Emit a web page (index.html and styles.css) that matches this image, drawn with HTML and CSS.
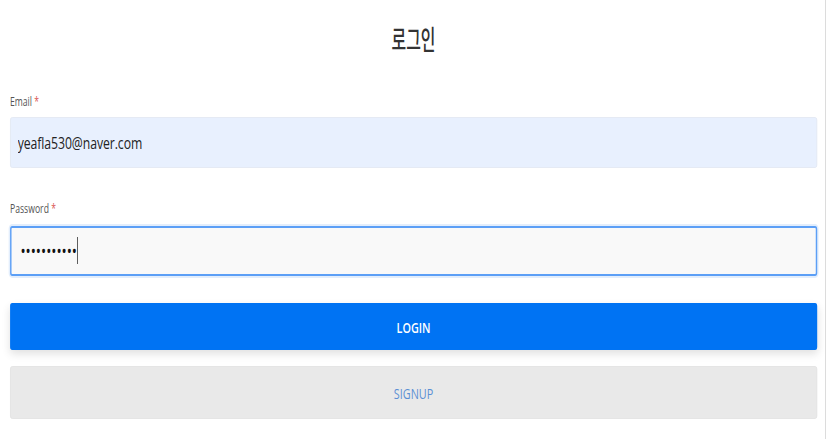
FILE: index.html
```html
<!DOCTYPE html>
<html lang="ko">
<head>
<meta charset="utf-8">
<title>로그인</title>
<link rel="stylesheet" href="styles.css">
</head>
<body>
<div class="page">
  <h1 class="title"><span>로그인</span></h1>
  <form class="form">
    <label class="label label-email" for="email">Email <span class="req">*</span></label>
    <input class="field field-email" id="email" type="email" value="yeafla530@naver.com">
    <label class="label label-pw" for="pw">Password <span class="req">*</span></label>
    <div class="pw-wrap">
      <input class="field field-pw" id="pw" type="password" value="12345678901">
      <span class="caret"></span>
    </div>
    <button type="button" class="btn btn-login">LOGIN</button>
    <button type="button" class="btn btn-signup">SIGNUP</button>
  </form>
</div>
</body>
</html>
```
FILE: styles.css
```css
* { box-sizing: border-box; }
html, body { margin: 0; padding: 0; background: #fff; }
body {
  width: 826px;
  height: 439px;
  overflow: hidden;
  border-right: 1px solid #dcdcdc;
  font-family: "Open Sans", "Noto Sans CJK KR", sans-serif;
}
.page {
  width: calc(825px / 0.72);
  transform: scaleX(0.72);
  transform-origin: 0 0;
  padding: 0 calc(8px / 0.72) 0 calc(10px / 0.72);
}
.title {
  margin: 0;
  padding-top: 22px;
  height: 95px;
  line-height: 34px;
  font-size: 27px;
  font-weight: 500;
  color: #333;
  text-align: center;
  font-family: "Noto Sans CJK KR", sans-serif;
}
.title span { display: inline-block; transform: scaleX(0.82); }
.form { display: flex; flex-direction: column; }
.label {
  font-size: 12px;
  line-height: 14px;
  color: #555;
}
.req { color: #d9534f; }
.label-pw { margin-top: 34px; }
.field {
  width: 100%;
  margin: 0;
  font-family: "Open Sans", sans-serif;
  font-size: 17px;
  color: #222;
  border-radius: 3px;
  outline: none;
}
.field-email {
  margin-top: 8px;
  height: 51px;
  background: #e8f0fe;
  border: 1px solid #e2e8f2;
  padding: 0 0 0 calc(7px / 0.72);
  letter-spacing: -0.1px;
}
.pw-wrap { position: relative; margin-top: 10px; }
.field-pw {
  display: block;
  height: 50px;
  background: #f9f9f9;
  border: 2px solid #5c9ff6;
  box-shadow: 0 0 0 2px #e3eefc;
  padding: 0 0 0 calc(9px / 0.72);
  font-size: 19px;
  font-weight: 400;
  color: #111;
}
.caret {
  position: absolute;
  left: calc(67px / 0.72);
  top: 11px;
  width: 1px;
  height: 27px;
  background: #222;
}
.btn {
  width: 100%;
  border: none;
  border-radius: 3px;
  font-family: "Open Sans", sans-serif;
  font-size: 15px;
  cursor: pointer;
}
.btn-login {
  margin-top: 27px;
  height: 47px;
  background: #0073f3;
  color: #fff;
  font-weight: 600;
  box-shadow: 0 4px 10px rgba(0, 0, 0, 0.12);
}
.btn-signup {
  margin-top: 16px;
  height: 53px;
  background: #e9e9e9;
  border: 1px solid #e2e2e2;
  color: #5a8fd4;
  font-weight: 400;
}
```
